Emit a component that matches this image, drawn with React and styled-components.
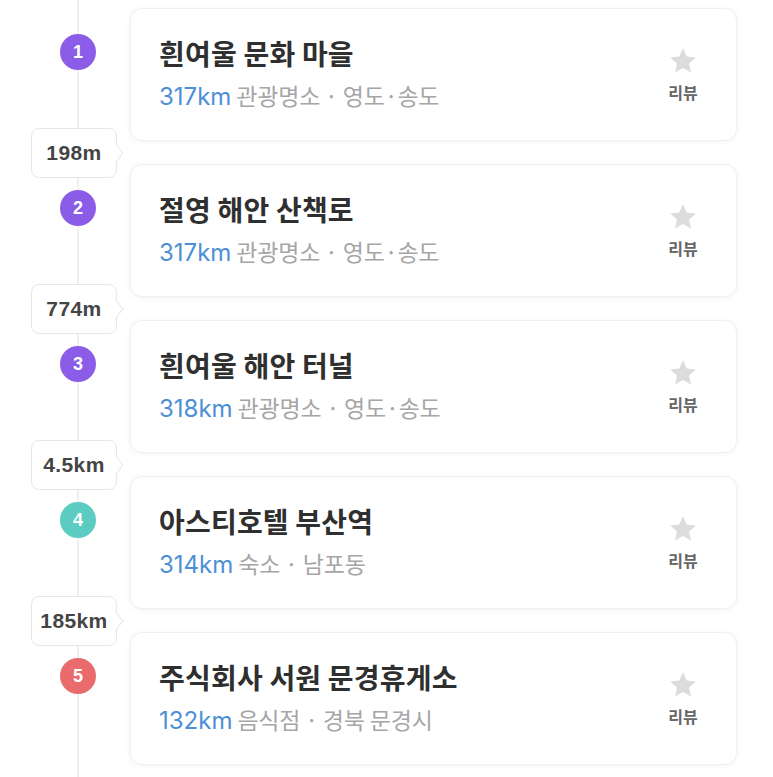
import React from "react";
import styled, { createGlobalStyle } from "styled-components";

const places = [
  { name: "흰여울 문화 마을", dist: "317km", info: "관광명소 · 영도·송도", color: "#8a5ce8", next: "198m" },
  { name: "절영 해안 산책로", dist: "317km", info: "관광명소 · 영도·송도", color: "#8a5ce8", next: "774m" },
  { name: "흰여울 해안 터널", dist: "318km", info: "관광명소 · 영도·송도", color: "#8a5ce8", next: "4.5km" },
  { name: "아스티호텔 부산역", dist: "314km", info: "숙소 · 남포동", color: "#5ccbc1", next: "185km" },
  { name: "주식회사 서원 문경휴게소", dist: "132km", info: "음식점 · 경북 문경시", color: "#e96b6b" },
];

const StarIcon = () => (
  <svg width="30" height="28" viewBox="0 0 24 23">
    <path
      d="M12 1l3.1 6.9 7.4.7-5.6 5 1.7 7.4L12 17.2 5.4 21l1.7-7.4-5.6-5 7.4-.7z"
      fill="#dcdcdc"
    />
  </svg>
);

const App = () => {
  return (
    <Page>
      <GlobalStyle />
      <Timeline>
        {places.map((p, i) => (
          <React.Fragment key={i}>
            <Row>
              <Rail>
                <Badge $color={p.color}>{i + 1}</Badge>
              </Rail>
              <Card>
                <Info>
                  <Title>{p.name}</Title>
                  <Meta>
                    <Dist>{p.dist}</Dist> {p.info}
                  </Meta>
                </Info>
                <Review>
                  <StarIcon />
                  <ReviewLabel>리뷰</ReviewLabel>
                </Review>
              </Card>
            </Row>
            {p.next && (
              <Gap>
                <Tag>{p.next}</Tag>
              </Gap>
            )}
          </React.Fragment>
        ))}
      </Timeline>
    </Page>
  );
};

const GlobalStyle = createGlobalStyle`
  body {
    margin: 0;
    background: #ffffff;
    font-family: "Noto Sans CJK KR", "Noto Sans", sans-serif;
  }
`;

const Page = styled.div`
  width: 773px;
  min-height: 777px;
  background: #ffffff;
`;

const Timeline = styled.div`
  position: relative;
  padding: 8px 0 12px;
  &::before {
    content: "";
    position: absolute;
    left: 77px;
    top: 0;
    bottom: 0;
    width: 2px;
    background: #efefef;
  }
`;

const Row = styled.div`
  position: relative;
  display: grid;
  grid-template-columns: 130px 607px;
`;

const Rail = styled.div`
  display: flex;
  justify-content: flex-start;
  padding: 26px 0 0 60px;
`;

const Badge = styled.div`
  width: 36px;
  height: 36px;
  border-radius: 50%;
  background: ${(p) => p.$color};
  color: #ffffff;
  font-family: "Liberation Sans", Arial, sans-serif;
  font-weight: 700;
  font-size: 18px;
  display: flex;
  align-items: center;
  justify-content: center;
`;

const Card = styled.div`
  height: 133px;
  box-sizing: border-box;
  background: #ffffff;
  border: 1px solid #f0f0f0;
  border-radius: 12px;
  box-shadow: 0 1px 6px rgba(0, 0, 0, 0.05);
  display: flex;
  align-items: flex-start;
  justify-content: space-between;
  padding: 25px 38px 0 28px;
`;

const Info = styled.div`
  display: flex;
  flex-direction: column;
`;

const Title = styled.div`
  font-size: 28px;
  font-weight: 600;
  color: #2f2f2f;
  line-height: 38px;
  letter-spacing: 0.2px;
`;

const Meta = styled.div`
  margin-top: 8px;
  font-size: 23px;
  line-height: 30px;
  color: #a6a6a6;
  letter-spacing: -0.2px;
`;

const Dist = styled.span`
  font-family: Inter, "Noto Sans", sans-serif;
  font-size: 24px;
  letter-spacing: 0;
  color: #4c8fd6;
`;

const Review = styled.div`
  display: flex;
  flex-direction: column;
  align-items: center;
  padding-top: 13px;
  gap: 8px;
`;

const ReviewLabel = styled.div`
  font-size: 16px;
  font-weight: 700;
  color: #666666;
  line-height: 18px;
`;

const Gap = styled.div`
  position: relative;
  height: 23px;
  display: flex;
  align-items: center;
  padding-left: 31px;
  z-index: 1;
`;

const Tag = styled.div`
  position: relative;
  width: 86px;
  height: 50px;
  box-sizing: border-box;
  margin: -14px 0;
  background: #ffffff;
  border: 1px solid #e6e6e6;
  border-radius: 8px;
  display: flex;
  align-items: center;
  justify-content: center;
  font-family: "Liberation Sans", Arial, sans-serif;
  font-size: 21px;
  font-weight: 700;
  letter-spacing: 0.4px;
  color: #444444;
  &::after {
    content: "";
    position: absolute;
    right: -6px;
    top: 50%;
    width: 12px;
    height: 12px;
    background: #ffffff;
    border-top: 1px solid #e6e6e6;
    border-right: 1px solid #e6e6e6;
    transform: translateY(-50%) rotate(45deg) skew(8deg, 8deg);
  }
`;

export default App;
